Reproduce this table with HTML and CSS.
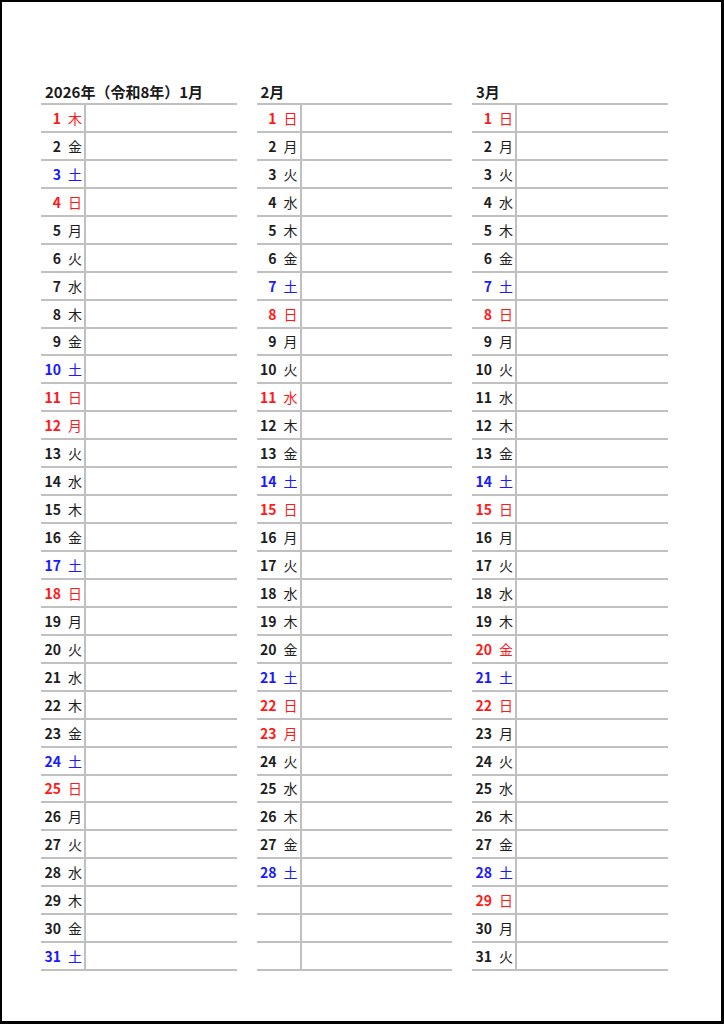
FILE: index.html
```html
<!DOCTYPE html>
<html lang="ja">
<head>
<meta charset="utf-8">
<title>2026年 カレンダー 1月〜3月</title>
<link rel="stylesheet" href="styles.css">
</head>
<body>
<div class="page">
  <div class="months">
    <section class="month">
      <h2 class="title">2026年（令和8年）1月</h2>
      <div class="row red"><div class="day"><span class="num">1</span><span class="wd">木</span></div></div>
      <div class="row"><div class="day"><span class="num">2</span><span class="wd">金</span></div></div>
      <div class="row blue"><div class="day"><span class="num">3</span><span class="wd">土</span></div></div>
      <div class="row red"><div class="day"><span class="num">4</span><span class="wd">日</span></div></div>
      <div class="row"><div class="day"><span class="num">5</span><span class="wd">月</span></div></div>
      <div class="row"><div class="day"><span class="num">6</span><span class="wd">火</span></div></div>
      <div class="row"><div class="day"><span class="num">7</span><span class="wd">水</span></div></div>
      <div class="row"><div class="day"><span class="num">8</span><span class="wd">木</span></div></div>
      <div class="row"><div class="day"><span class="num">9</span><span class="wd">金</span></div></div>
      <div class="row blue"><div class="day"><span class="num">10</span><span class="wd">土</span></div></div>
      <div class="row red"><div class="day"><span class="num">11</span><span class="wd">日</span></div></div>
      <div class="row red"><div class="day"><span class="num">12</span><span class="wd">月</span></div></div>
      <div class="row"><div class="day"><span class="num">13</span><span class="wd">火</span></div></div>
      <div class="row"><div class="day"><span class="num">14</span><span class="wd">水</span></div></div>
      <div class="row"><div class="day"><span class="num">15</span><span class="wd">木</span></div></div>
      <div class="row"><div class="day"><span class="num">16</span><span class="wd">金</span></div></div>
      <div class="row blue"><div class="day"><span class="num">17</span><span class="wd">土</span></div></div>
      <div class="row red"><div class="day"><span class="num">18</span><span class="wd">日</span></div></div>
      <div class="row"><div class="day"><span class="num">19</span><span class="wd">月</span></div></div>
      <div class="row"><div class="day"><span class="num">20</span><span class="wd">火</span></div></div>
      <div class="row"><div class="day"><span class="num">21</span><span class="wd">水</span></div></div>
      <div class="row"><div class="day"><span class="num">22</span><span class="wd">木</span></div></div>
      <div class="row"><div class="day"><span class="num">23</span><span class="wd">金</span></div></div>
      <div class="row blue"><div class="day"><span class="num">24</span><span class="wd">土</span></div></div>
      <div class="row red"><div class="day"><span class="num">25</span><span class="wd">日</span></div></div>
      <div class="row"><div class="day"><span class="num">26</span><span class="wd">月</span></div></div>
      <div class="row"><div class="day"><span class="num">27</span><span class="wd">火</span></div></div>
      <div class="row"><div class="day"><span class="num">28</span><span class="wd">水</span></div></div>
      <div class="row"><div class="day"><span class="num">29</span><span class="wd">木</span></div></div>
      <div class="row"><div class="day"><span class="num">30</span><span class="wd">金</span></div></div>
      <div class="row blue"><div class="day"><span class="num">31</span><span class="wd">土</span></div></div>
    </section>
    <section class="month">
      <h2 class="title">2月</h2>
      <div class="row red"><div class="day"><span class="num">1</span><span class="wd">日</span></div></div>
      <div class="row"><div class="day"><span class="num">2</span><span class="wd">月</span></div></div>
      <div class="row"><div class="day"><span class="num">3</span><span class="wd">火</span></div></div>
      <div class="row"><div class="day"><span class="num">4</span><span class="wd">水</span></div></div>
      <div class="row"><div class="day"><span class="num">5</span><span class="wd">木</span></div></div>
      <div class="row"><div class="day"><span class="num">6</span><span class="wd">金</span></div></div>
      <div class="row blue"><div class="day"><span class="num">7</span><span class="wd">土</span></div></div>
      <div class="row red"><div class="day"><span class="num">8</span><span class="wd">日</span></div></div>
      <div class="row"><div class="day"><span class="num">9</span><span class="wd">月</span></div></div>
      <div class="row"><div class="day"><span class="num">10</span><span class="wd">火</span></div></div>
      <div class="row red"><div class="day"><span class="num">11</span><span class="wd">水</span></div></div>
      <div class="row"><div class="day"><span class="num">12</span><span class="wd">木</span></div></div>
      <div class="row"><div class="day"><span class="num">13</span><span class="wd">金</span></div></div>
      <div class="row blue"><div class="day"><span class="num">14</span><span class="wd">土</span></div></div>
      <div class="row red"><div class="day"><span class="num">15</span><span class="wd">日</span></div></div>
      <div class="row"><div class="day"><span class="num">16</span><span class="wd">月</span></div></div>
      <div class="row"><div class="day"><span class="num">17</span><span class="wd">火</span></div></div>
      <div class="row"><div class="day"><span class="num">18</span><span class="wd">水</span></div></div>
      <div class="row"><div class="day"><span class="num">19</span><span class="wd">木</span></div></div>
      <div class="row"><div class="day"><span class="num">20</span><span class="wd">金</span></div></div>
      <div class="row blue"><div class="day"><span class="num">21</span><span class="wd">土</span></div></div>
      <div class="row red"><div class="day"><span class="num">22</span><span class="wd">日</span></div></div>
      <div class="row red"><div class="day"><span class="num">23</span><span class="wd">月</span></div></div>
      <div class="row"><div class="day"><span class="num">24</span><span class="wd">火</span></div></div>
      <div class="row"><div class="day"><span class="num">25</span><span class="wd">水</span></div></div>
      <div class="row"><div class="day"><span class="num">26</span><span class="wd">木</span></div></div>
      <div class="row"><div class="day"><span class="num">27</span><span class="wd">金</span></div></div>
      <div class="row blue"><div class="day"><span class="num">28</span><span class="wd">土</span></div></div>
      <div class="row"><div class="day"></div></div>
      <div class="row"><div class="day"></div></div>
      <div class="row"><div class="day"></div></div>
    </section>
    <section class="month">
      <h2 class="title">3月</h2>
      <div class="row red"><div class="day"><span class="num">1</span><span class="wd">日</span></div></div>
      <div class="row"><div class="day"><span class="num">2</span><span class="wd">月</span></div></div>
      <div class="row"><div class="day"><span class="num">3</span><span class="wd">火</span></div></div>
      <div class="row"><div class="day"><span class="num">4</span><span class="wd">水</span></div></div>
      <div class="row"><div class="day"><span class="num">5</span><span class="wd">木</span></div></div>
      <div class="row"><div class="day"><span class="num">6</span><span class="wd">金</span></div></div>
      <div class="row blue"><div class="day"><span class="num">7</span><span class="wd">土</span></div></div>
      <div class="row red"><div class="day"><span class="num">8</span><span class="wd">日</span></div></div>
      <div class="row"><div class="day"><span class="num">9</span><span class="wd">月</span></div></div>
      <div class="row"><div class="day"><span class="num">10</span><span class="wd">火</span></div></div>
      <div class="row"><div class="day"><span class="num">11</span><span class="wd">水</span></div></div>
      <div class="row"><div class="day"><span class="num">12</span><span class="wd">木</span></div></div>
      <div class="row"><div class="day"><span class="num">13</span><span class="wd">金</span></div></div>
      <div class="row blue"><div class="day"><span class="num">14</span><span class="wd">土</span></div></div>
      <div class="row red"><div class="day"><span class="num">15</span><span class="wd">日</span></div></div>
      <div class="row"><div class="day"><span class="num">16</span><span class="wd">月</span></div></div>
      <div class="row"><div class="day"><span class="num">17</span><span class="wd">火</span></div></div>
      <div class="row"><div class="day"><span class="num">18</span><span class="wd">水</span></div></div>
      <div class="row"><div class="day"><span class="num">19</span><span class="wd">木</span></div></div>
      <div class="row red"><div class="day"><span class="num">20</span><span class="wd">金</span></div></div>
      <div class="row blue"><div class="day"><span class="num">21</span><span class="wd">土</span></div></div>
      <div class="row red"><div class="day"><span class="num">22</span><span class="wd">日</span></div></div>
      <div class="row"><div class="day"><span class="num">23</span><span class="wd">月</span></div></div>
      <div class="row"><div class="day"><span class="num">24</span><span class="wd">火</span></div></div>
      <div class="row"><div class="day"><span class="num">25</span><span class="wd">水</span></div></div>
      <div class="row"><div class="day"><span class="num">26</span><span class="wd">木</span></div></div>
      <div class="row"><div class="day"><span class="num">27</span><span class="wd">金</span></div></div>
      <div class="row blue"><div class="day"><span class="num">28</span><span class="wd">土</span></div></div>
      <div class="row red"><div class="day"><span class="num">29</span><span class="wd">日</span></div></div>
      <div class="row"><div class="day"><span class="num">30</span><span class="wd">月</span></div></div>
      <div class="row"><div class="day"><span class="num">31</span><span class="wd">火</span></div></div>
    </section>
  </div>
</div>
</body>
</html>
```
FILE: styles.css
```css
* { box-sizing: border-box; }
html, body { margin: 0; padding: 0; background: #fff; }
body {
  font-family: "Noto Sans CJK JP", "Noto Sans", sans-serif;
  color: #1e1e1e;
}
.page {
  width: 724px;
  height: 1024px;
  border-style: solid;
  border-color: #000;
  border-width: 2px 3px 3px 2px;
  padding: 78px 0 0 39px;
}
.months {
  display: flex;
  gap: 20px;
}
.month {
  width: 195.5px;
  display: flex;
  flex-direction: column;
}
.title {
  margin: 0;
  height: 25px;
  padding-left: 4px;
  font-size: 15px;
  font-weight: bold;
  line-height: 23px;
  border-bottom: 2px solid #c0c0c0;
  color: #1a1a1a;
}
.row {
  height: 27.94px;
  display: flex;
  border-bottom: 2px solid #c0c0c0;
}
.day {
  flex: 0 0 45px;
  display: flex;
  justify-content: flex-end;
  align-items: center;
  padding-right: 2px;
  border-right: 2px solid #c0c0c0;
  font-size: 14px;
  line-height: 1;
}
.num {
  font-weight: bold;
}
.wd {
  width: 14px;
  margin-left: 7px;
  text-align: center;
  font-weight: normal;
}
.row.red .day { color: #ff1a1a; }
.row.blue .day { color: #1a1aff; }
```
